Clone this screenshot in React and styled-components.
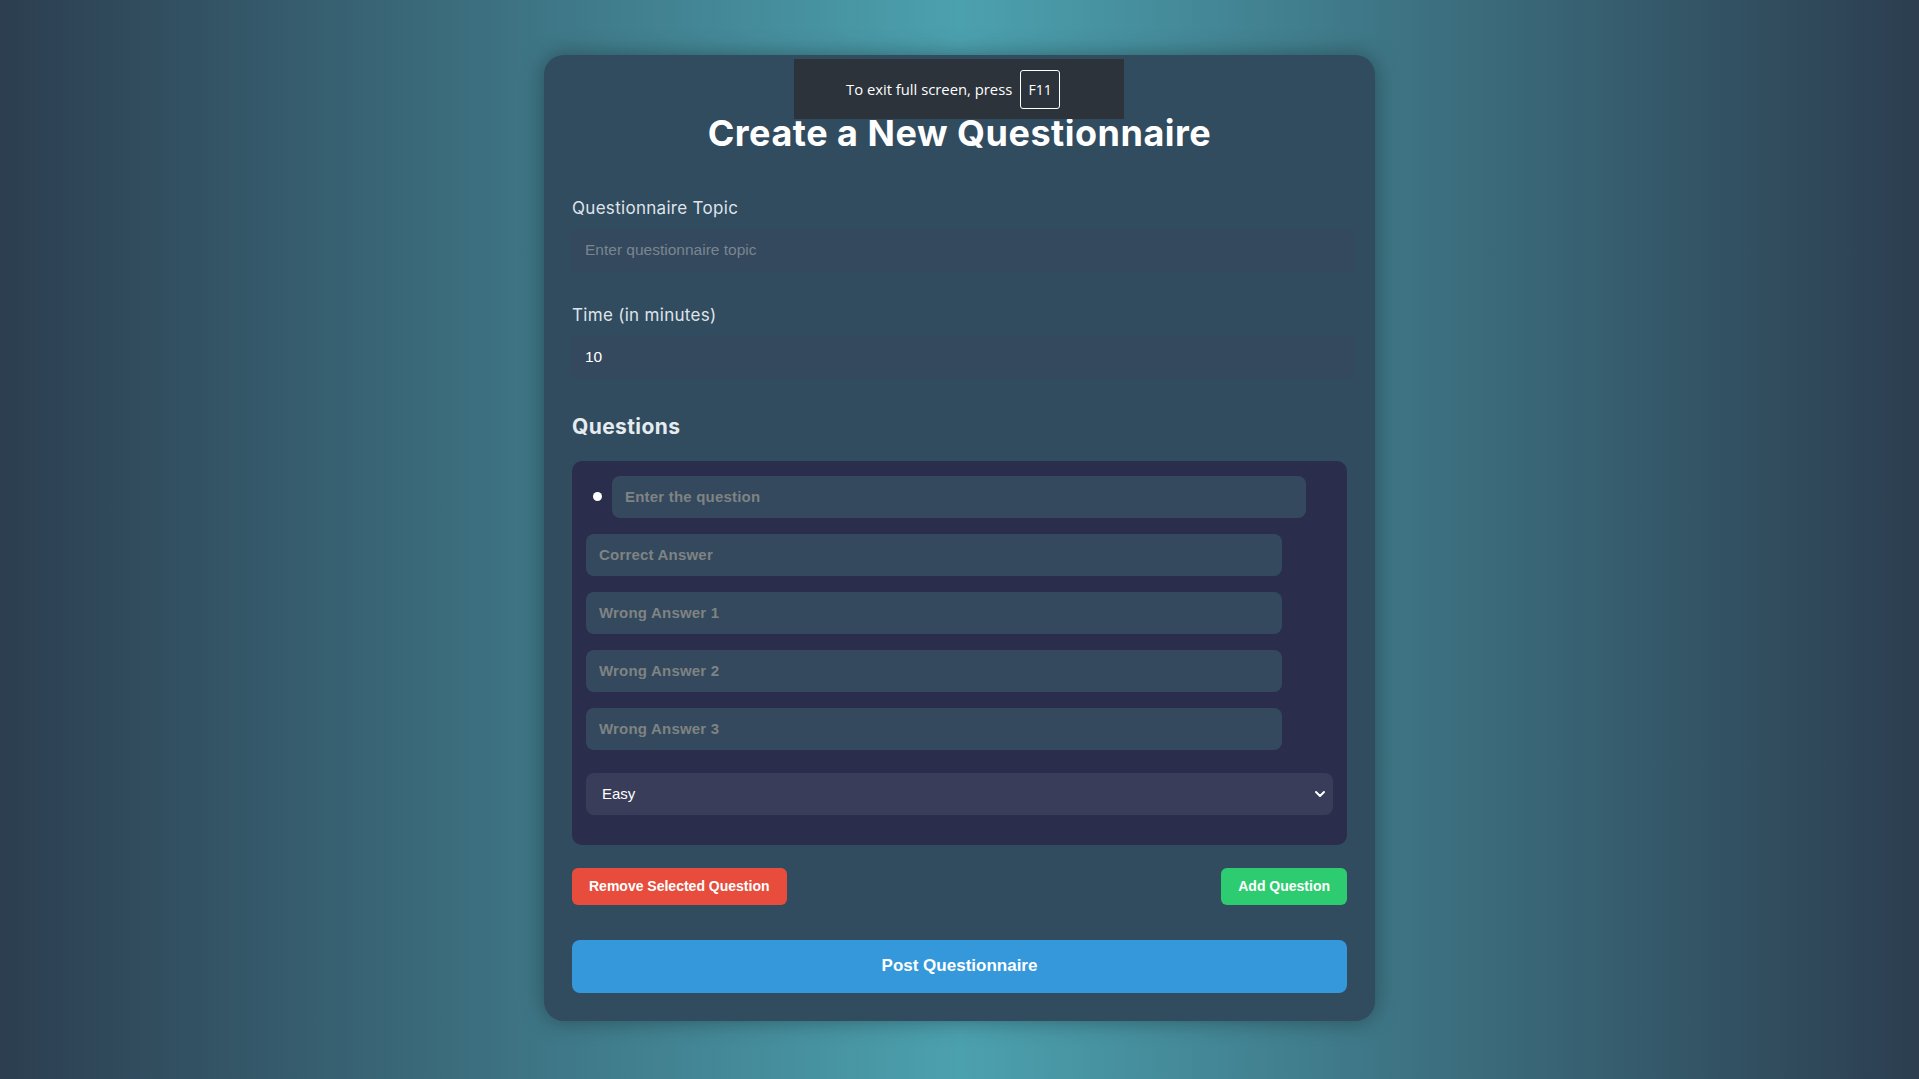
import React, { useState } from 'react';
import styled, { createGlobalStyle } from 'styled-components';
import { ChevronDown } from 'lucide-react';

const GlobalStyle = createGlobalStyle`
  html, body {
    margin: 0;
    padding: 0;
  }
  body {
    font-family: "Liberation Sans", Arial, sans-serif;
    background: linear-gradient(to right, #2c3e50, #4ca1af, #2c3e50);
    min-height: 100vh;
  }
  * {
    box-sizing: border-box;
  }
`;

const Page = styled.div`
  min-height: 100vh;
  padding-bottom: 4px;
  display: flex;
  align-items: center;
  justify-content: center;
  position: relative;
`;

const Card = styled.div`
  width: 831px;
  padding: 28px;
  background: #314b5f;
  border-radius: 20px;
  box-shadow: 0 0 22px rgba(0, 0, 0, 0.35);
  display: flex;
  flex-direction: column;
`;

const Title = styled.h2`
  margin: 29px 0 42px;
  text-align: center;
  font-family: Inter, "Noto Sans", sans-serif;
  font-weight: 700;
  font-size: 36px;
  line-height: 42px;
  letter-spacing: 0.5px;
  color: #ffffff;
`;

const Label = styled.label`
  display: block;
  font-family: Inter, "Noto Sans", sans-serif;
  font-size: 17px;
  line-height: 24px;
  letter-spacing: 0.3px;
  color: #dfe4ea;
  margin-bottom: 10px;
`;

const Field = styled.div`
  margin-bottom: ${(p) => p.$gap || 32}px;
`;

const TextInput = styled.input`
  display: block;
  width: calc(100% + 8px);
  height: 41px;
  padding: 0 13px;
  border: none;
  outline: none;
  border-radius: 4px;
  background: #34495e;
  color: #ffffff;
  font-family: "Liberation Sans", Arial, sans-serif;
  font-size: 15.5px;

  &::placeholder {
    color: #7b8590;
  }
`;

const SectionTitle = styled.h3`
  margin: 0 0 19px;
  font-family: Inter, "Noto Sans", sans-serif;
  font-weight: 700;
  font-size: 21px;
  line-height: 30px;
  letter-spacing: 0.4px;
  color: #e6ebf0;
`;

const QuestionBox = styled.div`
  background: #2a2d4b;
  border-radius: 10px;
  padding: 15px 14px 30px;
  display: flex;
  flex-direction: column;
`;

const QuestionRow = styled.div`
  display: flex;
  align-items: center;
  margin-bottom: 16px;
`;

const Radio = styled.input`
  appearance: none;
  width: 9px;
  height: 9px;
  margin: 0 10px 0 7px;
  border-radius: 50%;
  background: #ffffff;
  flex-shrink: 0;
`;

const AnswerInput = styled.input`
  display: block;
  width: ${(p) => p.$w || 696}px;
  height: 42px;
  padding: 0 13px;
  margin-bottom: ${(p) => p.$mb ?? 16}px;
  border: none;
  outline: none;
  border-radius: 8px;
  background: #34495e;
  color: #ffffff;
  font-family: "Liberation Sans", Arial, sans-serif;
  font-weight: 700;
  font-size: 15px;
  letter-spacing: 0.2px;

  &::placeholder {
    color: #7f8383;
  }
`;

const SelectWrap = styled.div`
  position: relative;
  margin-top: 23px;
`;

const Select = styled.select`
  appearance: none;
  width: 100%;
  height: 42px;
  padding: 0 16px;
  border: none;
  outline: none;
  border-radius: 8px;
  background: #3a3d59;
  color: #ffffff;
  font-family: "Liberation Sans", Arial, sans-serif;
  font-size: 15px;
`;

const Chevron = styled.span`
  position: absolute;
  right: 5px;
  top: 50%;
  transform: translateY(-50%);
  display: flex;
  color: #ffffff;
  pointer-events: none;
`;

const ButtonRow = styled.div`
  display: flex;
  justify-content: space-between;
  margin-top: 23px;
`;

const ActionButton = styled.button`
  height: 37px;
  padding: 0 17px;
  border: none;
  border-radius: 6px;
  background: ${(p) => p.$bg};
  color: #ffffff;
  font-family: "Liberation Sans", Arial, sans-serif;
  font-weight: 700;
  font-size: 14px;
  cursor: pointer;
`;

const PostButton = styled.button`
  margin-top: 35px;
  width: 100%;
  height: 53px;
  border: none;
  border-radius: 8px;
  background: #3498db;
  color: #ffffff;
  font-family: "Liberation Sans", Arial, sans-serif;
  font-weight: 700;
  font-size: 17px;
  cursor: pointer;
`;

const FullscreenHint = styled.div`
  position: absolute;
  top: 59px;
  left: 794px;
  width: 330px;
  height: 60px;
  padding-left: 52px;
  background: #2c333b;
  display: flex;
  align-items: center;
  gap: 8px;
  color: #ffffff;
  font-family: "Open Sans", "Noto Sans", sans-serif;
  font-size: 14.8px;
`;

const Key = styled.span`
  display: inline-flex;
  align-items: center;
  justify-content: center;
  width: 40px;
  height: 39px;
  border: 1px solid #ffffff;
  border-radius: 3px;
  font-size: 14px;
`;

export default function App() {
  const [topic, setTopic] = useState('');
  const [time, setTime] = useState('10');
  const [level, setLevel] = useState('easy');

  return (
    <>
      <GlobalStyle />
      <Page>
        <Card>
          <Title>Create a New Questionnaire</Title>

          <Field>
            <Label>Questionnaire Topic</Label>
            <TextInput
              placeholder="Enter questionnaire topic"
              value={topic}
              onChange={(e) => setTopic(e.target.value)}
            />
          </Field>

          <Field $gap={34}>
            <Label>Time (in minutes)</Label>
            <TextInput value={time} onChange={(e) => setTime(e.target.value)} />
          </Field>

          <SectionTitle>Questions</SectionTitle>

          <QuestionBox>
            <QuestionRow>
              <Radio type="radio" name="selected" />
              <AnswerInput $w={694} $mb={0} placeholder="Enter the question" />
            </QuestionRow>
            <AnswerInput placeholder="Correct Answer" />
            <AnswerInput placeholder="Wrong Answer 1" />
            <AnswerInput placeholder="Wrong Answer 2" />
            <AnswerInput placeholder="Wrong Answer 3" $mb={0} />
            <SelectWrap>
              <Select value={level} onChange={(e) => setLevel(e.target.value)}>
                <option value="easy">Easy</option>
                <option value="medium">Medium</option>
                <option value="hard">Hard</option>
              </Select>
              <Chevron>
                <ChevronDown size={16} strokeWidth={3} />
              </Chevron>
            </SelectWrap>
          </QuestionBox>

          <ButtonRow>
            <ActionButton $bg="#e74c3c">Remove Selected Question</ActionButton>
            <ActionButton $bg="#2ecc71">Add Question</ActionButton>
          </ButtonRow>

          <PostButton>Post Questionnaire</PostButton>
        </Card>

        <FullscreenHint>
          To exit full screen, press <Key>F11</Key>
        </FullscreenHint>
      </Page>
    </>
  );
}
